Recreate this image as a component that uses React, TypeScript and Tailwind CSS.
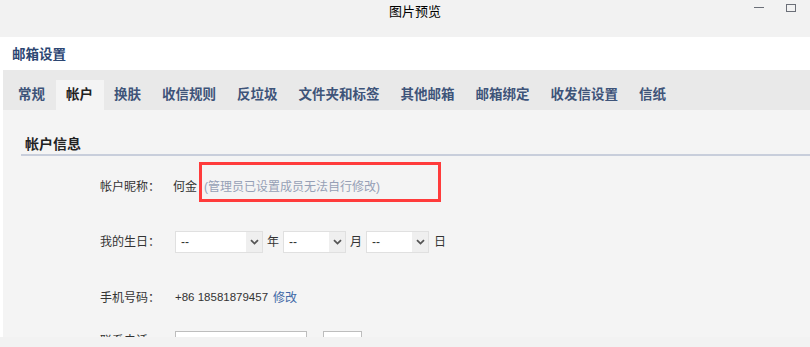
import React from "react";

const tabs = [
  "常规",
  "帐户",
  "换肤",
  "收信规则",
  "反垃圾",
  "文件夹和标签",
  "其他邮箱",
  "邮箱绑定",
  "收发信设置",
  "信纸",
];

const font = "font-['Liberation_Sans','Noto_Sans_CJK_SC',sans-serif]";

function FakeSelect({ width }: { width: string }) {
  return (
    <div
      className={`${width} h-[22px] bg-white border border-[#e0e0e0] flex items-center`}
    >
      <span className="flex-1 pl-[5px] text-[12px] text-[#333] leading-none">
        --
      </span>
      <span className="w-[16px] h-full bg-[#efefef] flex items-center justify-center">
        <svg width="9" height="6" viewBox="0 0 9 6">
          <path
            d="M1 1.2 L4.5 4.6 L8 1.2"
            fill="none"
            stroke="#555"
            strokeWidth="1.8"
          />
        </svg>
      </span>
    </div>
  );
}

export default function App() {
  return (
    <div
      className={`${font} w-[810px] h-[347px] overflow-hidden bg-[#f2f2f2] flex flex-col`}
    >
      {/* title bar */}
      <div className="h-[37px] shrink-0 relative flex justify-center">
        <span className="text-[13px] text-black leading-[24px] pl-[20px]">
          图片预览
        </span>
        <div className="absolute right-[14px] top-[4px] flex items-start gap-[22px]">
          <span className="mt-[3px] w-[10px] h-px bg-[#6b6f78]" />
          <span className="w-[10px] h-[8px] border border-[#6b6f78]" />
        </div>
      </div>

      {/* settings panel */}
      <div className="h-[300px] shrink-0 bg-white flex flex-col overflow-hidden">
        <div className="h-[33px] shrink-0 flex items-center pl-[12px] pt-[3px]">
          <span className="text-[13.5px] font-bold text-[#2c4672]">
            邮箱设置
          </span>
        </div>

        <div className="ml-[3px] h-[40px] shrink-0 bg-[#e9e9e9] flex items-end pl-[4.5px]">
          {tabs.map((t) => (
            <div
              key={t}
              className={`h-[30px] px-[10.5px] flex items-center text-[13.5px] font-bold whitespace-nowrap ${
                t === "帐户"
                  ? "bg-[#f4f4f4] text-[#222]"
                  : "text-[#3e5479]"
              }`}
            >
              {t}
            </div>
          ))}
        </div>

        <div className="ml-[3px] flex-1 bg-[#f4f4f4] pt-[25px]">
          <div className="ml-[18px]">
            <div className="h-[21px] border-b-2 border-[#c8cedb] pl-[4px]">
              <span className="text-[14px] font-bold text-[#222] leading-[19px] block">
                帐户信息
              </span>
            </div>

            <div className="ml-[79px] text-[12px] text-[#333]">
              <div className="relative mt-[19px] h-[24px] flex items-center">
                <span className="w-[73px] shrink-0">帐户昵称：</span>
                <span>何金</span>
                <span className="ml-[7px] text-[#96a0b6]">
                  (管理员已设置成员无法自行修改)
                </span>
                <div className="absolute left-[99px] top-[-13px] w-[242px] h-[40px] border-[3px] border-[#ff3b3b]" />
              </div>

              <div className="mt-[31px] h-[24px] flex items-center">
                <span className="w-[75px] shrink-0">我的生日：</span>
                <FakeSelect width="w-[88px]" />
                <span className="mx-[4px]">年</span>
                <FakeSelect width="w-[63px]" />
                <span className="mx-[4px]">月</span>
                <FakeSelect width="w-[63px]" />
                <span className="ml-[5px]">日</span>
              </div>

              <div className="mt-[32px] h-[24px] flex items-center">
                <span className="w-[75px] shrink-0">手机号码：</span>
                <span className="text-[11.5px]">+86 18581879457</span>
                <span className="ml-[5px] text-[#3f68a6]">修改</span>
              </div>

              <div className="mt-[17px] h-[24px] flex items-start">
                <span className="w-[75px] shrink-0 pt-[5px]">联系电话：</span>
                <div className="mt-[4px] w-[132px] h-[26px] bg-white border border-[#bdbdbd]" />
                <div className="ml-[16px] mt-[4px] w-[39px] h-[26px] bg-white border border-[#bdbdbd]" />
              </div>
            </div>
          </div>
        </div>
      </div>

      <div className="h-[10px] shrink-0 bg-[#f2f2f2]" />
    </div>
  );
}
